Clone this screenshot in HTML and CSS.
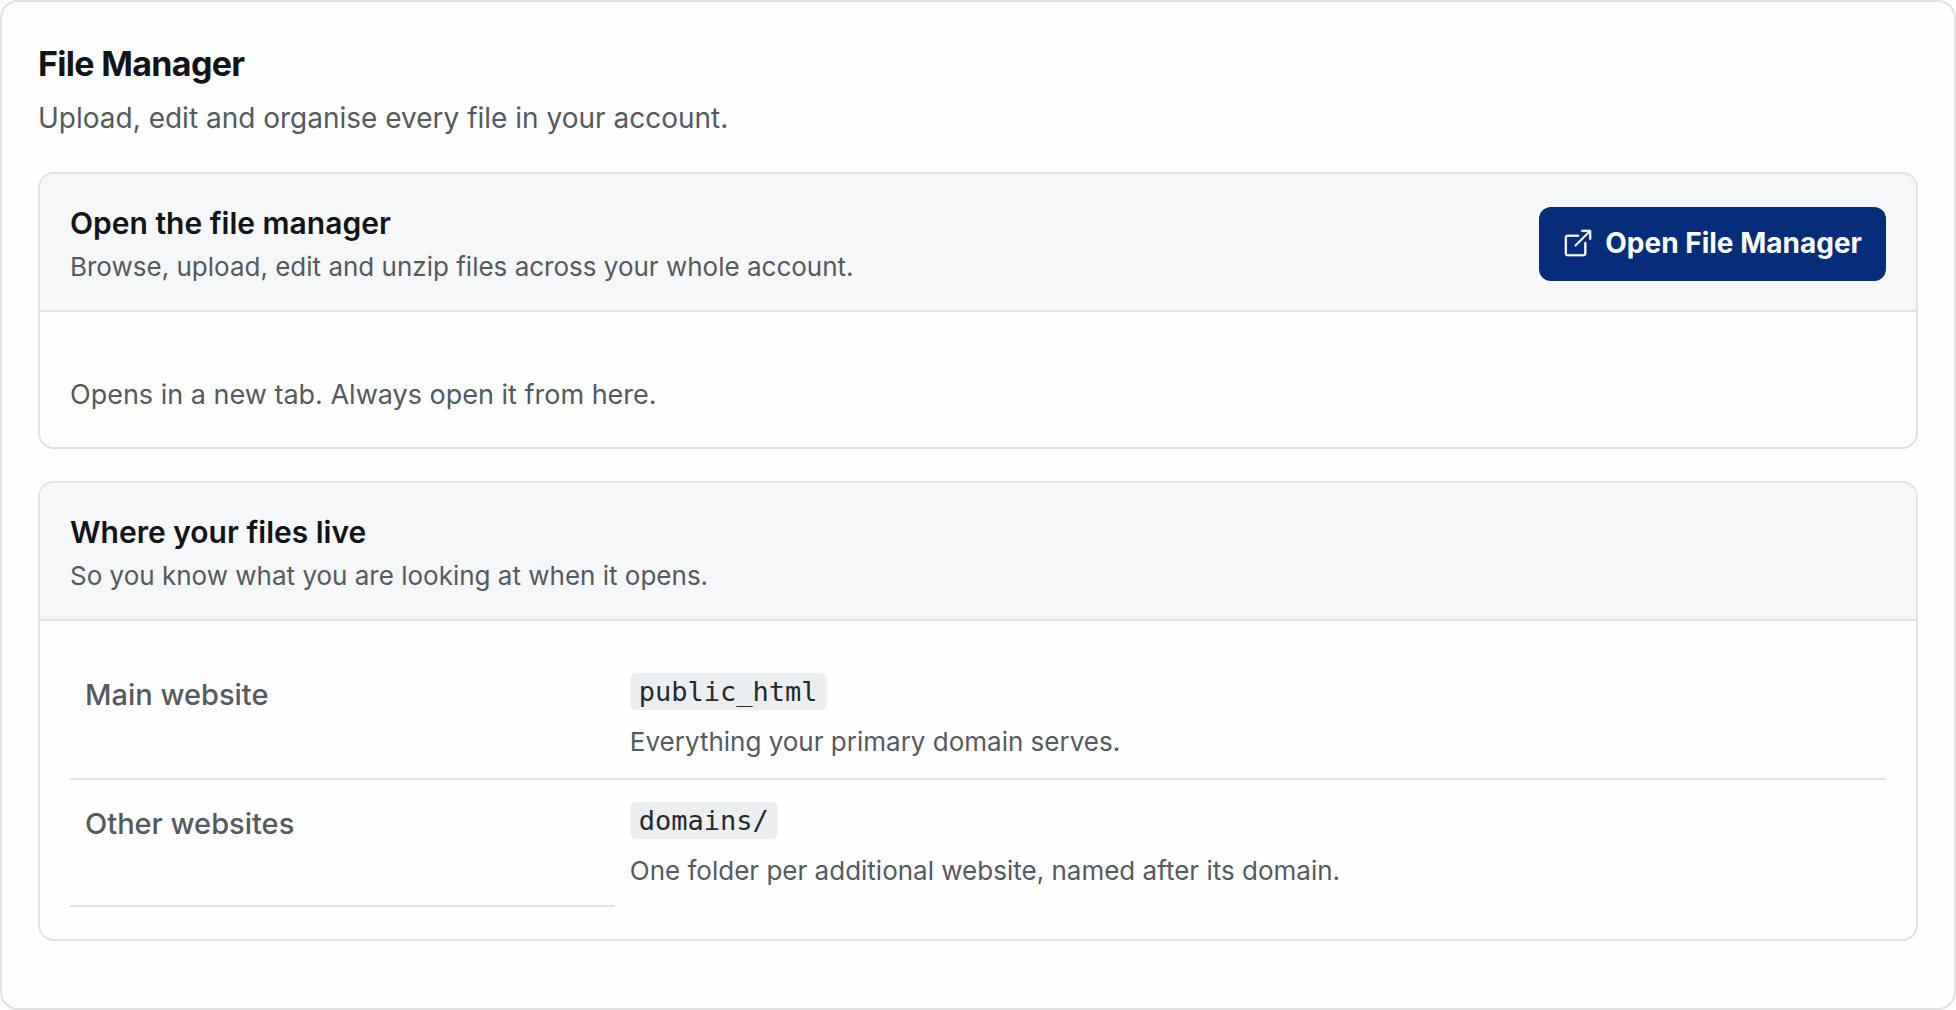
FILE: index.html
```html
<!DOCTYPE html>
<html lang="en">
<head>
    <meta charset="UTF-8">
    <meta name="viewport" content="width=device-width, initial-scale=1.0">
    <title>File Manager</title>
    <link rel="stylesheet" href="styles.css">
</head>
<body>
    <main class="page">
        <h1>File Manager</h1>
        <p class="intro">Upload, edit and organise every file in your account.</p>

        <section class="card">
            <header class="card-header">
                <div>
                    <h2>Open the file manager</h2>
                    <p>Browse, upload, edit and unzip files across your whole account.</p>
                </div>
                <a class="btn" href="#" target="_blank">
                    <svg class="btn-icon" viewBox="0 0 16 16" aria-hidden="true">
                        <path fill-rule="evenodd" d="M8.636 3.5a.5.5 0 0 0-.5-.5H1.5A1.5 1.5 0 0 0 0 4.5v10A1.5 1.5 0 0 0 1.5 16h10a1.5 1.5 0 0 0 1.5-1.5V7.864a.5.5 0 0 0-1 0V14.5a.5.5 0 0 1-.5.5h-10a.5.5 0 0 1-.5-.5v-10a.5.5 0 0 1 .5-.5h6.636a.5.5 0 0 0 .5-.5z"/>
                        <path fill-rule="evenodd" d="M16 .5a.5.5 0 0 0-.5-.5h-5a.5.5 0 0 0 0 1h3.793L6.146 9.146a.5.5 0 1 0 .708.708L15 1.707V5.5a.5.5 0 0 0 1 0v-5z"/>
                    </svg>
                    Open File Manager
                </a>
            </header>
            <div class="card-body">
                <p class="note">Opens in a new tab. Always open it from here.</p>
            </div>
        </section>

        <section class="card">
            <header class="card-header">
                <div>
                    <h2>Where your files live</h2>
                    <p>So you know what you are looking at when it opens.</p>
                </div>
            </header>
            <div class="card-body">
                <table class="paths">
                    <tbody>
                        <tr>
                            <th scope="row">Main website</th>
                            <td>
                                <code>public_html</code>
                                <p>Everything your primary domain serves.</p>
                            </td>
                        </tr>
                        <tr>
                            <th scope="row">Other websites</th>
                            <td>
                                <code>domains/</code>
                                <p>One folder per additional website, named after its domain.</p>
                            </td>
                        </tr>
                    </tbody>
                </table>
            </div>
        </section>
    </main>
</body>
</html>
```
FILE: styles.css
```css
* {
    box-sizing: border-box;
}
body {
    margin: 0;
    font-family: Inter, "Liberation Sans", sans-serif;
    font-size: 28px;
    line-height: 40px;
    color: #545a5e;
    background-color: #fff;
}
h1, h2, p {
    margin: 0;
}
h1 {
    font-size: 34px;
    font-weight: 700;
    line-height: 44px;
    letter-spacing: -0.02em;
    color: #121417;
}
h2 {
    margin-bottom: 1px;
    font-size: 30px;
    font-weight: 600;
    line-height: 46px;
    color: #121417;
}
.page {
    min-height: 100vh;
    padding: 40px 36px 24px;
    border: 2px solid #e0e2e4;
    border-radius: 18px;
    background-color: #fefefe;
}
.intro {
    margin: 12px 0 34px;
}
.card {
    margin-bottom: 32px;
    border: 2px solid #e0e2e4;
    border-radius: 16px;
    overflow: hidden;
    background-color: #fefefe;
}
.card-header {
    display: flex;
    align-items: center;
    justify-content: space-between;
    padding: 26px 30px 23px;
    border-bottom: 2px solid #e0e2e4;
    background-color: #f6f7f9;
}
.card-header p {
    font-size: 26px;
}
.card-body {
    padding: 30px 30px 32px;
}
.note {
    padding-top: 33px;
    font-size: 27px;
}
.btn {
    display: flex;
    align-items: center;
    gap: 14px;
    padding: 16px 24px 18px 26px;
    border-radius: 12px;
    font-size: 28px;
    font-weight: 700;
    color: #fff;
    background-color: #062d79;
    text-decoration: none;
}
.btn:hover {
    background-color: #052361;
}
.btn-icon {
    width: 26px;
    height: 26px;
    fill: currentColor;
    stroke: currentColor;
    stroke-width: 0.4;
    overflow: visible;
}
.paths {
    width: 100%;
    border-collapse: separate;
    border-spacing: 0;
}
.paths th, .paths td {
    padding: 20px 15px 16px;
    border-bottom: 2px solid #e0e2e4;
    text-align: left;
    vertical-align: top;
}
.paths th {
    width: 30%;
    padding-top: 24px;
    font-size: 29px;
    font-weight: 500;
}
.paths tr:last-child td {
    border-bottom: none;
}
.paths td p {
    margin-top: 10px;
    font-size: 26px;
}
.paths code {
    padding: 3px 9px;
    border-radius: 6px;
    font-family: "DejaVu Sans Mono", monospace;
    font-size: 27px;
    color: #24292d;
    background-color: #eceff1;
}
```
